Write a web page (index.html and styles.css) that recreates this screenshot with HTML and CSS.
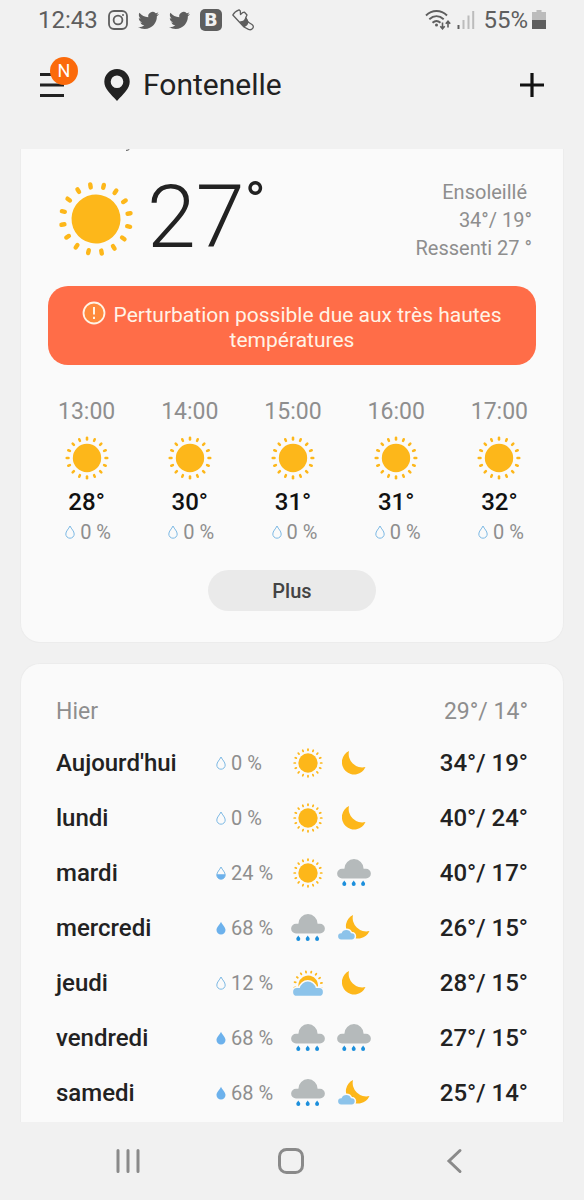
FILE: index.html
```html
<!DOCTYPE html>
<html lang="fr">
<head>
  <meta charset="UTF-8">
  <meta name="viewport" content="width=device-width, initial-scale=1.0">
  <title>Météo</title>
  <link rel="stylesheet" href="styles.css">
</head>
<body>

<!-- Icônes partagées -->
<svg class="sprite" aria-hidden="true">
  <symbol id="sun" viewBox="0 0 76 76">
    <g id="sun-shape">
      <circle cx="38" cy="38" r="24.5" fill="#fdb71a"/>
      <g id="rays" stroke="#fdb71a" stroke-width="4.4" stroke-linecap="round">
        <g id="rays-quarter">
          <path id="ray" d="M38 6v-3"/>
          <use href="#ray" transform="rotate(22.5 38 38)"/>
          <use href="#ray" transform="rotate(45 38 38)"/>
          <use href="#ray" transform="rotate(67.5 38 38)"/>
        </g>
        <use href="#rays-quarter" transform="rotate(90 38 38)"/>
        <use href="#rays-quarter" transform="rotate(180 38 38)"/>
        <use href="#rays-quarter" transform="rotate(270 38 38)"/>
      </g>
    </g>
  </symbol>
  <symbol id="moon" viewBox="0 0 24 24">
    <path id="moon-shape" d="M7 0A12.3 12.3 0 1 0 23.5 16A13.5 13.5 0 0 1 7 0z" fill="#fdb71a"/>
  </symbol>
  <symbol id="rain" viewBox="0 0 34 28">
    <path d="M5 19.500a4.900 4.900 0 0 1 0-9.800h2.400a9.600 9.600 0 0 1 19.200 0H29a4.900 4.900 0 0 1 0 9.800z" fill="#b5babb"/>
    <g fill="#1c8fdc">
      <path id="rain-drop" d="M7.300 21.400c-.8 1.300-2 2.200-2 3.500a2 2 0 0 0 4 0c0-1.300-1.200-2.200-2-3.500z"/>
      <use href="#rain-drop" x="9.400"/>
      <use href="#rain-drop" x="18.800"/>
    </g>
  </symbol>
  <symbol id="moon-cloud" viewBox="0 0 32 25">
    <use href="#moon-shape" x="8"/>
    <path d="M3.200 24.400a3.100 3.100 0 0 1 0-6.200h.4a5 5 0 0 1 9.400 0h.6a3.100 3.100 0 0 1 0 6.200z" fill="#8cc3ea" stroke="#fafafa" stroke-width="3" paint-order="stroke"/>
  </symbol>
  <symbol id="sun-cloud" viewBox="0 0 30 26">
    <use href="#sun-shape" transform="scale(.4) rotate(13 38 38)"/>
    <path d="M4 25.800a3.900 3.900 0 0 1 0-7.800h2.800a8.200 8.200 0 0 1 16 0H26a3.900 3.900 0 0 1 0 7.800z" fill="#8cc3ea" stroke="#fafafa" stroke-width="3" paint-order="stroke"/>
  </symbol>
  <symbol id="drop" viewBox="0 0 10 14">
    <path d="M5 1C3.600 4 .8 6.200.8 9a4.200 4.200 0 0 0 8.400 0C9.200 6.200 6.400 4 5 1z" fill="none" stroke="#7db9e4"/>
  </symbol>
  <symbol id="drop-half" viewBox="0 0 10 14">
    <path d="M5 1C3.600 4 .8 6.200.8 9a4.200 4.200 0 0 0 8.400 0C9.200 6.200 6.400 4 5 1z" fill="none" stroke="#7db9e4"/>
    <path d="M.8 8.200h8.400V9A4.200 4.200 0 0 1 .8 9z" fill="#6cb1ec"/>
  </symbol>
  <symbol id="drop-full" viewBox="0 0 10 14">
    <path d="M5 .8C3.600 4 .5 6.200.5 9a4.500 4.500 0 0 0 9 0C9.500 6.200 6.400 4 5 .8z" fill="#6cb1ec"/>
  </symbol>
  <symbol id="bird" viewBox="0 0 24 24">
    <path fill="currentColor" d="M23.953 4.570a10 10 0 01-2.825.775 4.958 4.958 0 002.163-2.723c-.951.555-2.005.959-3.127 1.184a4.920 4.920 0 00-8.384 4.482C7.690 8.095 4.067 6.130 1.640 3.162a4.822 4.822 0 00-.666 2.475c0 1.710.870 3.213 2.188 4.096a4.904 4.904 0 01-2.228-.616v.060a4.923 4.923 0 003.946 4.827 4.996 4.996 0 01-2.212.085 4.936 4.936 0 004.604 3.417 9.867 9.867 0 01-6.102 2.105c-.390 0-.779-.023-1.170-.067a13.995 13.995 0 007.557 2.209c9.053 0 13.998-7.496 13.998-13.985 0-.210 0-.420-.015-.630A9.935 9.935 0 0024 4.590z"/>
  </symbol>
</svg>

<div class="status">
  <span class="clock">12:43</span>
  <div class="notifs">
    <svg width="20" height="20" viewBox="0 0 20 20" fill="none" stroke="currentColor" stroke-width="1.800">
      <rect x="1" y="1" width="18" height="18" rx="5"/>
      <circle cx="10" cy="10" r="4.400"/>
      <circle cx="15" cy="5" r="1" fill="currentColor" stroke="none"/>
    </svg>
    <svg width="21" height="21"><use href="#bird"/></svg>
    <svg width="21" height="21"><use href="#bird"/></svg>
    <span class="app-b">B</span>
    <svg width="22" height="22" viewBox="0 0 22 22" fill="none" stroke="currentColor" stroke-width="1.300" stroke-linejoin="round">
      <path d="M.8 6C2 3.500 4 1.800 7 .8L8.300 2l.2 3.500 2-1.800 2-.5L15 6l-1.200 2.500L16 13l4 2.500c1.500 1 1.700 2.500.7 3.800-1 1.300-2.700 1.700-4.200 1L12 18z"/>
      <path d="M8.500 13c2.500 0 4.500-1.500 5.300-4L16 13c-.3 2-1.500 3.500-3.500 4.500z" fill="currentColor"/>
    </svg>
  </div>
  <svg class="wifi" width="27" height="22" viewBox="0 0 27 22" fill="none" stroke="currentColor" stroke-width="1.900">
    <path d="M1 6.500C7 .5 16 .5 22 6.500M4.300 10.300c4.400-4 10-4 14.400 0M7.500 13.800c2.500-2.300 5.500-2.300 8 0"/>
    <circle cx="11.500" cy="16" r="1.500" fill="currentColor" stroke="none"/>
    <path d="M17.500 13.500v6M15.300 17.300l2.200 2.400 2.200-2.400M23 18.500v-6M20.800 14.700l2.200-2.400 2.200 2.400" stroke-width="1.600"/>
  </svg>
  <svg width="18" height="20" viewBox="0 0 18 20">
    <path d="M.5 15h2v4h-2z" fill="#5e5e5e"/>
    <path d="M5.500 10h2v9h-2zM10.500 5.500h2V19h-2zM15.200 1h2v18h-2z" fill="#bcbcbc"/>
  </svg>
  <span class="percent">55%</span>
  <svg width="14" height="20" viewBox="0 0 14 20">
    <path d="M4.500 0h5v2H14v8H0V2h4.500z" fill="#bcbcbc"/>
    <path d="M0 10h14v9H0z" fill="#5e5e5e"/>
  </svg>
</div>

<header class="header">
  <button class="icon-btn menu" aria-label="Menu">
    <svg width="24" height="24" viewBox="0 0 24 24"><path d="M0 0h24v3H0zM0 10.500h24v3H0zM0 21h24v3H0z" fill="#222"/></svg>
    <span class="badge">N</span>
  </button>
  <svg class="pin" width="26" height="32" viewBox="0 0 26 32">
    <path d="M13 0A12.700 12.700 0 0 0 .3 12.700C.3 20 6.500 24.500 13 32c6.500-7.500 12.700-12 12.700-19.300A12.700 12.700 0 0 0 13 0zm0 6.500a6.300 6.300 0 1 1 0 12.600 6.300 6.300 0 0 1 0-12.600z" fill="#222"/>
  </svg>
  <h1 class="city">Fontenelle</h1>
  <button class="icon-btn" aria-label="Ajouter">
    <svg width="24" height="24" viewBox="0 0 24 24"><path d="M12 0v24M0 12h24" stroke="#111" stroke-width="3.200"/></svg>
  </button>
</header>

<main class="content">
  <section class="card card-now">
    <svg class="scrolled" width="6" height="2" viewBox="0 0 6 2"><path d="M1 1.400Q3.500 1.500 4.500 0" fill="none" stroke="#555"/></svg>
    <div class="now">
      <svg class="now-icon" viewBox="0 0 76 76"><use href="#sun-shape" transform="rotate(13 38 38)"/></svg>
      <div class="now-temp">27<span class="deg">°</span></div>
      <div class="now-info">Ensoleillé&nbsp;<br>34°/ 19°<br>Ressenti 27 °</div>
    </div>

    <p class="alert">
      <svg class="alert-icon" width="24" height="24" viewBox="0 0 24 24">
        <circle cx="12" cy="12" r="10.500" fill="#ff8a3c" stroke="#fff3e6" stroke-width="1.800"/>
        <path d="M12 6v7.500M12 15.800v2.200" stroke="#fff3e6" stroke-width="2"/>
      </svg>
      Perturbation possible due aux très hautes températures
    </p>

    <ul class="hours">
      <li>
        <span class="hour">13:00</span>
        <svg class="hour-icon"><use href="#sun"/></svg>
        <span class="hour-temp">28°</span>
        <span class="precip"><svg class="drop"><use href="#drop"/></svg>0 %</span>
      </li>
      <li>
        <span class="hour">14:00</span>
        <svg class="hour-icon"><use href="#sun"/></svg>
        <span class="hour-temp">30°</span>
        <span class="precip"><svg class="drop"><use href="#drop"/></svg>0 %</span>
      </li>
      <li>
        <span class="hour">15:00</span>
        <svg class="hour-icon"><use href="#sun"/></svg>
        <span class="hour-temp">31°</span>
        <span class="precip"><svg class="drop"><use href="#drop"/></svg>0 %</span>
      </li>
      <li>
        <span class="hour">16:00</span>
        <svg class="hour-icon"><use href="#sun"/></svg>
        <span class="hour-temp">31°</span>
        <span class="precip"><svg class="drop"><use href="#drop"/></svg>0 %</span>
      </li>
      <li>
        <span class="hour">17:00</span>
        <svg class="hour-icon"><use href="#sun"/></svg>
        <span class="hour-temp">32°</span>
        <span class="precip"><svg class="drop"><use href="#drop"/></svg>0 %</span>
      </li>
    </ul>

    <button class="more">Plus</button>
  </section>

  <section class="card card-days">
    <table class="days">
      <tr class="past">
        <th class="day" scope="row">Hier</th>
        <td class="rain"></td>
        <td class="sky"></td>
        <td class="sky"></td>
        <td class="temps">29°/ 14°</td>
      </tr>
      <tr>
        <th scope="row">Aujourd'hui</th>
        <td><span class="precip"><svg class="drop"><use href="#drop"/></svg>0 %</span></td>
        <td class="sky"><svg class="sun"><use href="#sun"/></svg></td>
        <td class="sky"><svg class="moon"><use href="#moon"/></svg></td>
        <td class="temps">34°/ 19°</td>
      </tr>
      <tr>
        <th scope="row">lundi</th>
        <td><span class="precip"><svg class="drop"><use href="#drop"/></svg>0 %</span></td>
        <td class="sky"><svg class="sun"><use href="#sun"/></svg></td>
        <td class="sky"><svg class="moon"><use href="#moon"/></svg></td>
        <td class="temps">40°/ 24°</td>
      </tr>
      <tr>
        <th scope="row">mardi</th>
        <td><span class="precip"><svg class="drop"><use href="#drop-half"/></svg>24 %</span></td>
        <td class="sky"><svg class="sun"><use href="#sun"/></svg></td>
        <td class="sky"><svg class="cloud"><use href="#rain"/></svg></td>
        <td class="temps">40°/ 17°</td>
      </tr>
      <tr>
        <th scope="row">mercredi</th>
        <td><span class="precip"><svg class="drop"><use href="#drop-full"/></svg>68 %</span></td>
        <td class="sky"><svg class="cloud"><use href="#rain"/></svg></td>
        <td class="sky"><svg class="moon-cloud"><use href="#moon-cloud"/></svg></td>
        <td class="temps">26°/ 15°</td>
      </tr>
      <tr>
        <th scope="row">jeudi</th>
        <td><span class="precip"><svg class="drop"><use href="#drop"/></svg>12 %</span></td>
        <td class="sky"><svg class="sun-cloud"><use href="#sun-cloud"/></svg></td>
        <td class="sky"><svg class="moon"><use href="#moon"/></svg></td>
        <td class="temps">28°/ 15°</td>
      </tr>
      <tr>
        <th scope="row">vendredi</th>
        <td><span class="precip"><svg class="drop"><use href="#drop-full"/></svg>68 %</span></td>
        <td class="sky"><svg class="cloud"><use href="#rain"/></svg></td>
        <td class="sky"><svg class="cloud"><use href="#rain"/></svg></td>
        <td class="temps">27°/ 15°</td>
      </tr>
      <tr>
        <th scope="row">samedi</th>
        <td><span class="precip"><svg class="drop"><use href="#drop-full"/></svg>68 %</span></td>
        <td class="sky"><svg class="cloud"><use href="#rain"/></svg></td>
        <td class="sky"><svg class="moon-cloud"><use href="#moon-cloud"/></svg></td>
        <td class="temps">25°/ 14°</td>
      </tr>
    </table>
  </section>
</main>

<nav class="navbar">
  <button class="icon-btn" aria-label="Applications récentes">
    <svg width="26" height="26" viewBox="0 0 26 26" stroke="#8a8a8a" stroke-width="3" stroke-linecap="round"><path d="M3 2.500v21M13 2.500v21M23 2.500v21"/></svg>
  </button>
  <button class="icon-btn" aria-label="Accueil">
    <svg width="26" height="26" viewBox="0 0 26 26" fill="none" stroke="#8a8a8a" stroke-width="3"><rect x="1.500" y="1.500" width="23" height="23" rx="7"/></svg>
  </button>
  <button class="icon-btn" aria-label="Retour">
    <svg width="26" height="26" viewBox="0 0 26 26" fill="none" stroke="#8a8a8a" stroke-width="3" stroke-linecap="round"><path d="M19 2.500L8 13l11 10.500"/></svg>
  </button>
</nav>

</body>
</html>
```

FILE: styles.css
```css
* {
  box-sizing: border-box;
}
body {
  margin: 0;
  min-height: 100vh;
  display: flex;
  flex-direction: column;
  background-color: #f1f1f1;
  color: #222;
  font-family: Roboto, "Liberation Sans", sans-serif;
}
svg {
  display: block;
  flex-shrink: 0;
}
.sprite {
  position: absolute;
  width: 0;
  height: 0;
}
button {
  font-family: inherit;
  border: none;
  cursor: pointer;
}
.icon-btn {
  padding: 0;
  background: none;
}

/* Barre d'état */
.status {
  display: flex;
  align-items: center;
  height: 40px;
  padding: 0 38px;
  color: #5e5e5e;
  font-size: 24px;
}
.clock {
  margin-right: 10px;
}
.notifs {
  display: flex;
  align-items: center;
  gap: 10px;
  margin-right: auto;
}
.app-b {
  width: 22px;
  height: 22px;
  border-radius: 5px;
  background-color: #5e5e5e;
  color: #f1f1f1;
  font: bold 18px/22px "DejaVu Sans", sans-serif;
  text-align: center;
}
.wifi {
  margin-right: 5px;
}
.percent {
  margin: 0 4px 0 8px;
}

/* En-tête */
.header {
  display: flex;
  align-items: center;
  padding: 24px 40px 43px;
}
.menu {
  position: relative;
}
.badge {
  position: absolute;
  left: 10px;
  bottom: 12px;
  width: 28px;
  height: 28px;
  border-radius: 50%;
  background-color: #fb6a0b;
  color: #fff;
  font-size: 18px;
  line-height: 28px;
  text-align: center;
}
.pin {
  margin: 0 13px 0 40px;
}
.city {
  margin: 0 auto 0 0;
  font-size: 30px;
  line-height: 42px;
  font-weight: 400;
}

/* Cartes */
.content {
  flex: 1;
  display: flex;
  flex-direction: column;
  gap: 20px;
  padding: 0 20px;
}
.card {
  background-color: #fafafa;
  border: 1px solid #ececec;
  border-radius: 20px;
}
.card-now {
  border-top: none;
  border-top-left-radius: 0;
  border-top-right-radius: 0;
  padding-bottom: 31px;
}
.scrolled {
  margin-left: 104px;
}
.now {
  display: flex;
  align-items: center;
  padding: 18px 31px 0 37px;
}
.now-icon {
  width: 76px;
  height: 76px;
}
.now-temp {
  display: flex;
  margin: 0 auto 0 13px;
  padding-bottom: 4px;
  font-size: 88px;
  line-height: 96px;
  font-weight: 300;
}
.deg {
  font-size: 56px;
  line-height: 66px;
  font-weight: 400;
}
.now-info {
  padding-top: 2px;
  color: #8e8e8e;
  font-size: 20px;
  line-height: 28px;
  text-align: right;
}

/* Alerte */
.alert {
  margin: 17px 27px 0;
  padding: 17px 24px 12px;
  border-radius: 20px;
  background-color: #ff6d48;
  color: #fff3e6;
  font-size: 21px;
  line-height: 25px;
  text-align: center;
}
.alert-icon {
  display: inline-block;
  margin: -8px 2px -4px 0;
  vertical-align: 1px;
}

/* Prévisions par heure */
.hours {
  display: grid;
  grid-template-columns: repeat(5, 1fr);
  margin: 32px 12px 23px 14px;
  padding: 0;
  list-style: none;
}
.hours li {
  display: flex;
  flex-direction: column;
  align-items: center;
}
.hour {
  color: #8e8e8e;
  font-size: 23px;
  line-height: 30px;
}
.hour-icon {
  width: 44px;
  height: 44px;
  margin: 9px 0 7px;
}
.hour-temp {
  color: #111;
  font-size: 24px;
  line-height: 30px;
  font-weight: 500;
}
.precip {
  display: flex;
  align-items: center;
  gap: 5px;
  color: #8e8e8e;
  font-size: 20px;
  line-height: 30px;
  font-weight: 400;
}
.hours .precip {
  padding-left: 3px;
}
.drop {
  width: 10px;
  height: 14px;
}
.more {
  display: block;
  width: 168px;
  height: 41px;
  margin: 0 auto;
  border-radius: 21px;
  background-color: #eaeaea;
  color: #444;
  font-size: 20px;
  font-weight: 500;
}

/* Prévisions par jour */
.card-days {
  flex: 1;
  padding: 24px 35px 0;
  border-bottom: none;
  border-bottom-left-radius: 0;
  border-bottom-right-radius: 0;
}
.days {
  width: 100%;
  table-layout: fixed;
  border-collapse: collapse;
  font-size: 24px;
  font-weight: 500;
}
.days tr {
  height: 55px;
}
.days .past {
  height: 47px;
  color: #8e8e8e;
  font-size: 23px;
}
.days th,
.days td {
  padding: 0;
}
.days th {
  font-weight: 500;
  text-align: left;
}
.days .past th,
.days .past td {
  font-weight: 400;
}
.day {
  width: 160px;
}
.rain {
  width: 69px;
}
.sky {
  width: 46px;
}
.sky svg {
  margin: 0 auto;
}
.temps {
  text-align: right;
}
.sun {
  width: 30px;
  height: 30px;
}
.moon {
  width: 24px;
  height: 24px;
}
.cloud {
  width: 34px;
  height: 28px;
}
.moon-cloud {
  width: 32px;
  height: 25px;
}
.sun-cloud {
  width: 30px;
  height: 26px;
}

/* Barre de navigation */
.navbar {
  display: grid;
  grid-template-columns: repeat(3, 1fr);
  justify-items: center;
  align-items: center;
  height: 78px;
  padding: 0 48px 0 46px;
}
```
